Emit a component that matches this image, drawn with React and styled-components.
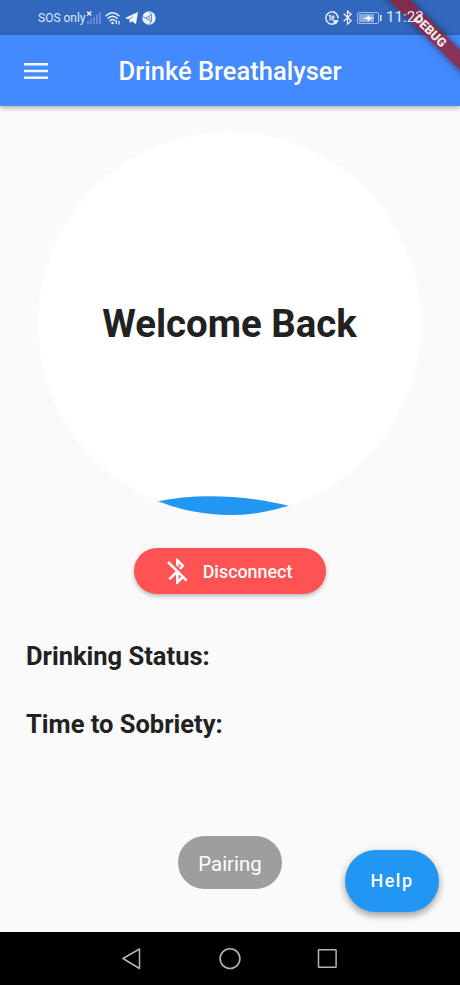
import React from "react";
import styled, { createGlobalStyle } from "styled-components";

const GlobalStyle = createGlobalStyle`
  *, *::before, *::after { box-sizing: border-box; }
  body { margin: 0; background: #fafafa; font-family: Roboto, sans-serif; }
  button { font-family: inherit; border: 0; padding: 0; }
  svg { display: block; flex: none; overflow: visible; }
`;

const Screen = styled.div`
  position: relative;
  display: flex;
  flex-direction: column;
  width: 460px;
  height: 985px;
  overflow: hidden;
  background: #fafafa;
  color: #212121;
`;

const StatusBar = styled.div`
  display: flex;
  justify-content: space-between;
  height: 35px;
  padding: 0 37px 0 38px;
  background: #3267be;
  color: #dceaff;
`;

const StatusGroup = styled.div`
  position: relative;
  z-index: 3;
  display: flex;
  align-items: center;
  height: 35px;
`;

const Carrier = styled.span`
  width: 47px;
  font-size: 12px;
  line-height: 36px;
  white-space: nowrap;
`;

const Clock = styled.span`
  width: 37px;
  margin-left: 4px;
  font-size: 15.2px;
  line-height: 35px;
  white-space: nowrap;
`;

const StatusIcon = styled.svg`
  margin-left: ${(p) => p.$gap || 0}px;
`;

const AppBar = styled.header`
  z-index: 1;
  display: grid;
  grid-template-columns: 72px 1fr 72px;
  align-items: center;
  height: 71px;
  background: #448aff;
  box-shadow: 0 2px 5px rgba(0, 0, 0, 0.3);
`;

const MenuButton = styled.button`
  display: flex;
  justify-content: center;
  background: none;
`;

const Title = styled.h1`
  margin: 0;
  color: #fff;
  font-size: 25.5px;
  font-weight: 500;
  line-height: 34px;
  text-align: center;
  white-space: nowrap;
`;

const Body = styled.main`
  display: flex;
  flex-direction: column;
  align-items: center;
  height: 826px;
  padding-top: 26px;
`;

const Dial = styled.div`
  display: grid;
  width: 383px;
  height: 383px;
  margin-right: 1px;
  border-radius: 50%;
  background: #fff;
  overflow: hidden;

  > * { grid-area: 1 / 1; }
`;

const DialLabel = styled.h2`
  align-self: center;
  justify-self: center;
  margin: 0;
  font-size: 38.4px;
  font-weight: 700;
  line-height: 46px;
  white-space: nowrap;
`;

const DisconnectButton = styled.button`
  display: flex;
  align-items: center;
  width: 192px;
  height: 46px;
  margin-top: 33px;
  padding-left: 28px;
  gap: 10px;
  border-radius: 23px;
  background: #ff5252;
  color: #fff;
  font-size: 17.9px;
  font-weight: 500;
  box-shadow: 0 2px 4px rgba(0, 0, 0, 0.28);
`;

const Readings = styled.section`
  display: flex;
  flex-direction: column;
  align-self: stretch;
  gap: 38px;
  margin-top: 47px;
  padding-left: 26px;
`;

const Reading = styled.p`
  margin: 0;
  font-size: 25.5px;
  font-weight: 700;
  line-height: 30px;
  white-space: nowrap;
`;

const Toast = styled.div`
  position: absolute;
  left: 178px;
  top: 836px;
  width: 104px;
  height: 53px;
  border-radius: 26.5px;
  background: #9e9e9e;
  color: #fff;
  font-size: 20.4px;
  line-height: 56px;
  text-align: center;
`;

const HelpButton = styled.button`
  position: absolute;
  right: 21px;
  bottom: 73px;
  width: 94px;
  height: 62px;
  padding-bottom: 1px;
  border-radius: 31px;
  background: #2196f3;
  color: #fff;
  font-size: 17.9px;
  font-weight: 500;
  letter-spacing: 1.55px;
  box-shadow: 0 4px 7px rgba(0, 0, 0, 0.3), 0 1px 10px rgba(0, 0, 0, 0.1);
`;

const NavBar = styled.nav`
  display: flex;
  justify-content: center;
  align-items: center;
  gap: 76px;
  height: 53px;
  background: #000;
`;

const DebugBanner = styled.div`
  position: absolute;
  z-index: 2;
  left: 353px;
  top: 23px;
  width: 154px;
  height: 15.4px;
  transform: rotate(45deg);
  background: rgba(155, 26, 38, 0.76);
  box-shadow: 0 0 7px rgba(0, 0, 0, 0.5);
  color: #f6e9ec;
  font-size: 12.6px;
  font-weight: 900;
  line-height: 15.4px;
  text-align: center;
`;

const SignalIcon = () => (
  <StatusIcon width="16" height="18" viewBox="0 0 16 18" $gap={1}>
    <path d="M1.200 2.500l4 4M5.200 2.500l-4 4" stroke="#eef5ff" strokeWidth="1.400" />
    <path d="M2 15v-3M5 15v-5M8 15V8M11 15V5.500M14 15V3" stroke="#6f99dc" strokeWidth="1.500" />
  </StatusIcon>
);

const WifiIcon = () => (
  <StatusIcon width="16" height="14" viewBox="0 0 16 14" $gap={3}>
    <g fill="none" stroke="#e6f0ff" strokeWidth="1.500" strokeLinecap="round">
      <path d="M1 4.800Q7.500-1.300 14 4.800" />
      <path d="M3 7.300Q7.500 3.300 12 7.300" />
      <path d="M5 9.700Q7.500 7.700 9.500 9.300" />
    </g>
    <circle cx="7.500" cy="12" r="1.300" fill="#e6f0ff" />
    <path d="M11.300 9v4M14 10v3.500" stroke="#e6f0ff" strokeWidth="1.300" />
  </StatusIcon>
);

const TelegramIcon = () => (
  <StatusIcon width="13" height="12" viewBox="0 0 13 12" $gap={4}>
    <path d="M0 6L13 0l-2 12-4.200-2.800L4.800 11 4.300 7.600 9.500 3.500 3.200 7.200z" fill="#f3f8ff" />
  </StatusIcon>
);

const BallIcon = () => (
  <StatusIcon width="14" height="14" viewBox="0 0 14 14" $gap={4}>
    <circle cx="7" cy="7" r="6.700" fill="#e6f0ff" />
    <path
      d="M3.500 7.200L9.500 3.500V10.500zM3.500 7.200L1 5.500M9.500 3.500L7.500 1M9.500 10.500L7.500 13"
      fill="none"
      stroke="#4f7fcd"
      strokeWidth=".9"
    />
    <path d="M5.800 7.100L8.300 5.600v3z" fill="#7fa3dc" />
  </StatusIcon>
);

const DataSaverIcon = () => (
  <StatusIcon width="14" height="14" viewBox="0 0 14 14">
    <path d="M9 12.700A6.100 6.100 0 1 1 13 7.500" fill="none" stroke="#e6f0ff" strokeWidth="1.500" />
    <path d="M3.800 5l1.200-.8V9.500M7 9.500V5.500q1.500-1.200 2 .3T7.500 8.500" fill="none" stroke="#e6f0ff" strokeWidth="1.200" />
    <path d="M8 9H13.500q-.8 4-4.500 4.500z" fill="#e6f0ff" />
  </StatusIcon>
);

const BluetoothIcon = () => (
  <StatusIcon width="9" height="15" viewBox="0 0 9 15" $gap={4}>
    <path d="M.7 3.800l7.400 7L4.500 14V1l3.600 3.200-7.400 7" fill="none" stroke="#e6f0ff" strokeWidth="1.300" />
  </StatusIcon>
);

const BatteryIcon = () => (
  <StatusIcon width="25" height="12" viewBox="0 0 25 12" $gap={5}>
    <rect x=".6" y=".6" width="21" height="10.800" rx="1.300" fill="none" stroke="#a9c6ee" strokeWidth="1" />
    <rect x="2" y="2" width="15" height="8" fill="#86a9df" />
    <path d="M5.500 6.300l4.500-1 1-2.300 1.800 2.200 4.200.8-4 1.300-1.500 2-1.500-2z" fill="#fff" />
    <path d="M23.800 3v6" stroke="#e6f0ff" strokeWidth="1.500" />
  </StatusIcon>
);

const MenuIcon = () => (
  <svg width="24" height="16" viewBox="0 0 24 16">
    <path d="M0 1.300h24M0 8h24M0 14.700h24" stroke="#f1f8ff" strokeWidth="2.600" />
  </svg>
);

const Wave = () => (
  <svg width="383" height="383" viewBox="0 0 383 383">
    <path d="M119 369.500C158 361 207 363 252 374L252 383H119z" fill="#2196f3" />
  </svg>
);

const BluetoothOffIcon = () => (
  <svg width="30.700" height="30.700" viewBox="0 0 24 24">
    <path
      d="M13 5.830l1.880 1.880-1.600 1.600 1.410 1.410 3.020-3.020L12 2h-1v5.030l2 2v-3.200zM5.410 4L4 5.410 10.590 12 5 17.590 6.410 19 11 14.410V22h1l4.290-4.290 2.300 2.290L20 18.590 5.410 4zM13 18.170v-3.760l1.880 1.880L13 18.170z"
      fill="#fff"
    />
  </svg>
);

const BackIcon = () => (
  <svg width="22" height="22" viewBox="0 0 22 22">
    <path d="M2 10.500L18.500 1v19.500z" fill="none" stroke="#b5b5b5" strokeWidth="1.500" strokeLinejoin="round" />
  </svg>
);

const HomeIcon = () => (
  <svg width="22" height="22" viewBox="0 0 22 22">
    <circle cx="11" cy="10.600" r="9.900" fill="none" stroke="#b5b5b5" strokeWidth="1.600" />
  </svg>
);

const RecentsIcon = () => (
  <svg width="22" height="22" viewBox="0 0 22 22">
    <rect x="1.500" y="1.700" width="17.600" height="17.600" rx=".6" fill="none" stroke="#b5b5b5" strokeWidth="1.500" />
  </svg>
);

export default function App() {
  return (
    <Screen>
      <GlobalStyle />
      <StatusBar>
        <StatusGroup>
          <Carrier>SOS only</Carrier>
          <SignalIcon />
          <WifiIcon />
          <TelegramIcon />
          <BallIcon />
        </StatusGroup>
        <StatusGroup>
          <DataSaverIcon />
          <BluetoothIcon />
          <BatteryIcon />
          <Clock>11:23</Clock>
        </StatusGroup>
      </StatusBar>
      <AppBar>
        <MenuButton aria-label="Menu">
          <MenuIcon />
        </MenuButton>
        <Title>Drinké Breathalyser</Title>
      </AppBar>
      <Body>
        <Dial>
          <Wave />
          <DialLabel>Welcome Back</DialLabel>
        </Dial>
        <DisconnectButton>
          <BluetoothOffIcon />
          Disconnect
        </DisconnectButton>
        <Readings>
          <Reading>Drinking Status:</Reading>
          <Reading>Time to Sobriety:</Reading>
        </Readings>
      </Body>
      <NavBar>
        <BackIcon />
        <HomeIcon />
        <RecentsIcon />
      </NavBar>
      <Toast>Pairing</Toast>
      <HelpButton>Help</HelpButton>
      <DebugBanner>DEBUG</DebugBanner>
    </Screen>
  );
}
